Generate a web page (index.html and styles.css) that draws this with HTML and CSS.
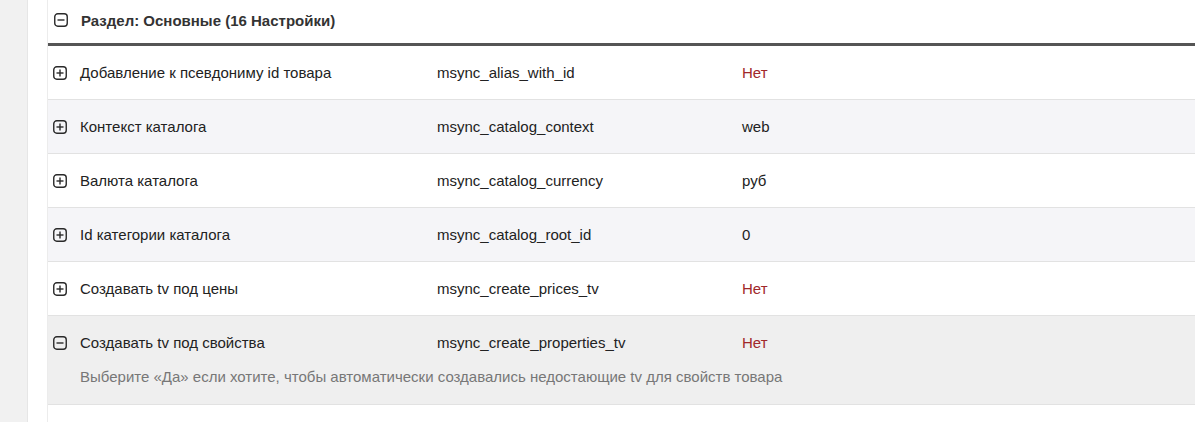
FILE: index.html
```html
<!DOCTYPE html>
<html>
<head>
<meta charset="utf-8">
<link rel="stylesheet" href="styles.css">
</head>
<body>
<div class="page">
  <div class="sidebar"></div>
  <div class="panel">
    <div class="section-head">
      <svg class="ico" viewBox="0 0 14 14"><rect x="0.75" y="0.75" width="12.5" height="12.5" rx="3" /><line x1="3.5" y1="7" x2="10.5" y2="7"/></svg>
      <span class="section-title">Раздел: Основные (16 Настройки)</span>
    </div>
    <div class="row">
      <div class="line">
        <svg class="ico" viewBox="0 0 14 14"><rect x="0.75" y="0.75" width="12.5" height="12.5" rx="3" /><line x1="3.5" y1="7" x2="10.5" y2="7"/><line x1="7" y1="3.5" x2="7" y2="10.5"/></svg>
        <span class="name">Добавление к псевдониму id товара</span>
        <span class="key">msync_alias_with_id</span>
        <span class="val no">Нет</span>
      </div>
    </div>
    <div class="row alt">
      <div class="line">
        <svg class="ico" viewBox="0 0 14 14"><rect x="0.75" y="0.75" width="12.5" height="12.5" rx="3" /><line x1="3.5" y1="7" x2="10.5" y2="7"/><line x1="7" y1="3.5" x2="7" y2="10.5"/></svg>
        <span class="name">Контекст каталога</span>
        <span class="key">msync_catalog_context</span>
        <span class="val">web</span>
      </div>
    </div>
    <div class="row">
      <div class="line">
        <svg class="ico" viewBox="0 0 14 14"><rect x="0.75" y="0.75" width="12.5" height="12.5" rx="3" /><line x1="3.5" y1="7" x2="10.5" y2="7"/><line x1="7" y1="3.5" x2="7" y2="10.5"/></svg>
        <span class="name">Валюта каталога</span>
        <span class="key">msync_catalog_currency</span>
        <span class="val">руб</span>
      </div>
    </div>
    <div class="row alt">
      <div class="line">
        <svg class="ico" viewBox="0 0 14 14"><rect x="0.75" y="0.75" width="12.5" height="12.5" rx="3" /><line x1="3.5" y1="7" x2="10.5" y2="7"/><line x1="7" y1="3.5" x2="7" y2="10.5"/></svg>
        <span class="name">Id категории каталога</span>
        <span class="key">msync_catalog_root_id</span>
        <span class="val">0</span>
      </div>
    </div>
    <div class="row">
      <div class="line">
        <svg class="ico" viewBox="0 0 14 14"><rect x="0.75" y="0.75" width="12.5" height="12.5" rx="3" /><line x1="3.5" y1="7" x2="10.5" y2="7"/><line x1="7" y1="3.5" x2="7" y2="10.5"/></svg>
        <span class="name">Создавать tv под цены</span>
        <span class="key">msync_create_prices_tv</span>
        <span class="val no">Нет</span>
      </div>
    </div>
    <div class="row open">
      <div class="line">
        <svg class="ico" viewBox="0 0 14 14"><rect x="0.75" y="0.75" width="12.5" height="12.5" rx="3" /><line x1="3.5" y1="7" x2="10.5" y2="7"/></svg>
        <span class="name">Создавать tv под свойства</span>
        <span class="key">msync_create_properties_tv</span>
        <span class="val no">Нет</span>
      </div>
      <div class="desc">Выберите «Да» если хотите, чтобы автоматически создавались недостающие tv для свойств товара</div>
    </div>
  </div>
</div>
</body>
</html>
```
FILE: styles.css
```css
html, body {
  margin: 0;
  padding: 0;
  background: #fff;
}
body {
  font-family: "Liberation Sans", Arial, sans-serif;
  font-size: 15px;
  color: #222;
}
.page {
  display: flex;
  min-height: 422px;
}
.sidebar {
  width: 27px;
  background: #f1f1f1;
  border-right: 1px solid #e6e6e6;
  flex: none;
}
.panel {
  flex: 1;
  margin-left: 19px;
  border-left: 1px solid #ececec;
}
.section-head {
  height: 40px;
  display: flex;
  align-items: center;
  padding-left: 6px;
  gap: 13px;
  border-bottom: 3px solid #555;
  padding-bottom: 3px;
}
.section-title {
  font-weight: bold;
  color: #333;
}
.ico {
  width: 14px;
  height: 14px;
  flex: none;
  fill: none;
  stroke: #2a2a2a;
  stroke-width: 1.4;
}
.row {
  border-bottom: 1px solid #e2e2e2;
}
.row.alt {
  background: #f5f5f8;
}
.row.open {
  background: #efefef;
}
.line {
  height: 53px;
  display: flex;
  align-items: center;
  padding-left: 5px;
}
.line .ico {
  margin-right: 13px;
}
.name {
  width: 357px;
  flex: none;
}
.key {
  width: 305px;
  flex: none;
}
.val.no {
  color: #a0282a;
}
.desc {
  padding: 0 0 17px 32px;
  margin-top: -2px;
  color: #777;
  line-height: 20px;
}
```
